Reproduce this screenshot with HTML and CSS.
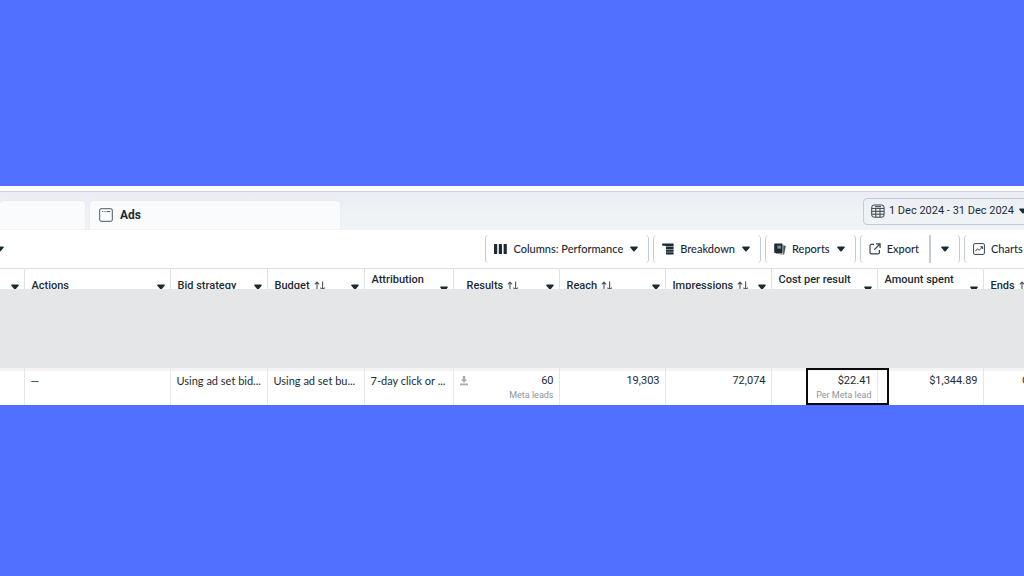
FILE: index.html
```html
<!DOCTYPE html>
<html lang="en">
  <head>
    <meta charset="UTF-8" />
    <meta name="viewport" content="width=device-width, initial-scale=1.0" />
    <title>Ads</title>
    <link rel="stylesheet" href="styles.css">
  </head>
  <body>
    <svg width="0" height="0" class="symbols" aria-hidden="true">
      <symbol id="caret" viewBox="0 0 8 6">
        <path d="M1 .5h6c.8 0 1.1.8.6 1.3L4.6 5.3c-.3.4-.9.4-1.2 0L.4 1.8C-.1 1.3.2.5 1 .5z" fill="currentColor" />
      </symbol>
      <symbol id="sort" viewBox="0 0 12 10">
        <path d="M3 9.5V1M.8 3.4L3 1l2.2 2.4M8.6.5V9M6.4 6.6L8.6 9l2.2-2.4" fill="none" stroke="currentColor" stroke-width="1.1" />
      </symbol>
    </svg>

    <main class="panel">
      <header class="tabs">
        <a href="#" class="tab tab-prev" aria-label="Ad sets"></a>
        <a href="#" class="tab tab-ads">
          <svg width="14" height="14" viewBox="0 0 14 14" fill="none" stroke="#4b5963">
            <rect x=".7" y=".7" width="12.6" height="12.6" rx="1.4" />
            <path d="M3 3.6h1.2M5.4 3.6h1.2M7.6 3.6h3.6" />
          </svg>
          Ads
        </a>
        <button class="date">
          <svg width="14" height="14" viewBox="0 0 14 14" fill="none" stroke="#34434c">
            <rect x=".7" y="1" width="12.4" height="12.2" rx="2.4" />
            <path d="M.7 4.4h12.4M.7 7.3h12.4M.7 10.2h12.4M4.8 4.4v8.8M9 4.4v8.8M4 2.7h6" />
          </svg>
          <span>1 Dec 2024 - 31 Dec 2024</span>
          <svg class="caret"><use href="#caret" /></svg>
        </button>
      </header>

      <div class="toolbar">
        <button class="more" aria-label="More"><svg class="caret"><use href="#caret" /></svg></button>
        <button class="tool columns">
          <svg width="13" height="10" viewBox="0 0 13 10" fill="#1c2b33">
            <rect x="0" y="0" width="3.2" height="10" rx=".6" />
            <rect x="4.8" y="0" width="3.2" height="10" rx=".6" />
            <rect x="9.6" y="0" width="3.2" height="10" rx=".6" />
          </svg>
          <span>Columns: Performance</span>
          <svg class="caret"><use href="#caret" /></svg>
        </button>
        <button class="tool breakdown">
          <svg width="12" height="12" viewBox="0 0 12 12" fill="#1c2b33">
            <path d="M.2.6h11.4v2.8H3.6V2.8H.2zM4 3.9h7.6v2.2H4zM4 6.6h7.6v2.2H4zM4 9.3h7.6v2.2H4z" />
          </svg>
          <span>Breakdown</span>
          <svg class="caret"><use href="#caret" /></svg>
        </button>
        <button class="tool reports">
          <svg width="12" height="12" viewBox="0 0 12 12">
            <path d="M1 .6h6.6c.6 0 1 .4 1 1v8c0 .6-.4 1-1 1H2.4L.2 9.4V1.6c0-.6.3-1 .8-1z" fill="#1c2b33" />
            <path d="M3.4 2.6h3.4v3H3.4z" fill="#87929a" />
            <path d="M9.2 2.2l2 .6c.4.1.6.5.5.9l-1.4 7c-.1.5-.5.8-1 .7L4 10.9h4.2c.6 0 1-.4 1-1z" fill="#46545d" />
          </svg>
          <span>Reports</span>
          <svg class="caret"><use href="#caret" /></svg>
        </button>
        <div class="split">
          <button class="tool export">
            <svg width="12" height="12" viewBox="0 0 12 12" fill="none" stroke="#34434c" stroke-width="1.2">
              <path d="M5 1.4H2.4C1.6 1.4 1 2 1 2.8v6.6c0 .8.6 1.4 1.4 1.4H9c.8 0 1.4-.6 1.4-1.4V7M7 .9h4.1V5M11 1L5.2 6.8" />
            </svg>
            <span>Export</span>
          </button>
          <button class="tool export-more" aria-label="Export options"><svg class="caret"><use href="#caret" /></svg></button>
        </div>
        <button class="tool charts">
          <svg width="12" height="12" viewBox="0 0 12 12" fill="none" stroke="#34434c">
            <rect x=".6" y=".6" width="10.8" height="10.8" rx="1.2" />
            <path d="M2.4 8.2l2-2.4 1.8 1.4L9.4 4M7.2 3.8h2.4v2.2" />
          </svg>
          <span>Charts</span>
        </button>
      </div>

      <table>
        <colgroup>
          <col class="c-first"><col class="c-actions"><col class="c-text"><col class="c-text"><col class="c-attr">
          <col class="c-num"><col class="c-num"><col class="c-num"><col class="c-num"><col class="c-num"><col>
        </colgroup>
        <thead>
          <tr>
            <th><div class="head"><svg class="caret"><use href="#caret" /></svg></div></th>
            <th><div class="head"><span>Actions</span><svg class="caret"><use href="#caret" /></svg></div></th>
            <th><div class="head"><span>Bid strategy</span><svg class="caret"><use href="#caret" /></svg></div></th>
            <th><div class="head"><span>Budget</span><svg class="sort"><use href="#sort" /></svg><svg class="caret"><use href="#caret" /></svg></div></th>
            <th><div class="head tall"><span>Attribution</span><svg class="caret"><use href="#caret" /></svg></div></th>
            <th><div class="head num"><span>Results</span><svg class="sort"><use href="#sort" /></svg><svg class="caret"><use href="#caret" /></svg></div></th>
            <th><div class="head"><span>Reach</span><svg class="sort"><use href="#sort" /></svg><svg class="caret"><use href="#caret" /></svg></div></th>
            <th><div class="head"><span>Impressions</span><svg class="sort"><use href="#sort" /></svg><svg class="caret"><use href="#caret" /></svg></div></th>
            <th><div class="head tall"><span>Cost per result</span><svg class="caret"><use href="#caret" /></svg></div></th>
            <th><div class="head tall"><span>Amount spent</span><svg class="caret"><use href="#caret" /></svg></div></th>
            <th><div class="head"><span>Ends</span><svg class="sort"><use href="#sort" /></svg></div></th>
          </tr>
        </thead>
        <tbody>
          <tr class="blank"><td colspan="11"></td></tr>
          <tr class="row">
            <td></td>
            <td>—</td>
            <td>Using ad set bid...</td>
            <td>Using ad set bu...</td>
            <td>7-day click or ...</td>
            <td class="right">
              <div class="result">
                <svg width="8" height="10" viewBox="0 0 8 10" fill="#a3abb0">
                  <path d="M2.8 0h2.4v3.4h2L4 6.8.8 3.4h2zM0 7.6h8v1.6H0z" />
                </svg>
                <span>60</span>
              </div>
              <small>Meta leads</small>
            </td>
            <td class="right">19,303</td>
            <td class="right">72,074</td>
            <td class="right marked">$22.41<small>Per Meta lead</small></td>
            <td class="right">$1,344.89</td>
            <td class="right ends">Ongoing</td>
          </tr>
        </tbody>
      </table>
    </main>
  </body>
</html>
```

FILE: styles.css
```css
*,
*::after {
  margin: 0;
  padding: 0;
  box-sizing: border-box;
}
body {
  font-family: Roboto, "Liberation Sans", sans-serif;
  font-size: 11px;
  line-height: 14px;
  color: #1c2b33;
  background-color: #5170ff;
  min-height: 100vh;
  display: flex;
  flex-direction: column;
  justify-content: center;
  padding-top: 14px;
  overflow: hidden;
}
.symbols {
  position: absolute;
}
button {
  font: inherit;
  color: inherit;
  background: none;
  border: none;
  cursor: pointer;
  white-space: nowrap;
}
svg {
  flex-shrink: 0;
}
.caret {
  width: 8px;
  height: 6px;
}
.sort {
  width: 12px;
  height: 10px;
  color: #4b5860;
}
/* the last column and the last button run past the right edge */
.panel {
  width: calc(100% + 66px);
  background-color: #fff;
  border-top: 5px solid #fff;
}

/* tabs */
.tabs {
  display: flex;
  align-items: flex-end;
  gap: 5px;
  height: 39px;
  border-top: 1px solid #cfd4da;
  background: linear-gradient(#eaedf4, #eff3f6 60%);
}
.tab {
  height: 29px;
  background-color: #fafbfd;
  border-radius: 4px 4px 0 0;
  box-shadow: 0 0 2px #dde2e7;
  color: inherit;
  font-size: 12px;
  font-weight: 700;
  text-decoration: none;
  clip-path: inset(-3px -3px 0 -3px);
}
.tab-prev {
  width: 85px;
}
.tab-ads {
  width: 250px;
  padding-left: 9px;
  display: flex;
  align-items: center;
  gap: 7px;
}
.date {
  display: flex;
  align-items: center;
  gap: 4px;
  height: 27px;
  margin: 0 56px 5px auto;
  padding: 0 6px 0 7px;
  border: 1px solid #c3cbd6;
  border-radius: 4px;
}
.date .caret {
  margin-left: 1px;
}

/* toolbar */
.toolbar {
  display: flex;
  align-items: center;
  justify-content: flex-end;
  gap: 4px;
  height: 38px;
  padding-right: 50px;
}
.more {
  display: flex;
  margin: 0 auto 0 -4px;
}
.tool {
  display: flex;
  align-items: center;
  gap: 6px;
  height: 28px;
  padding: 0 10px 0 8px;
  border-left: 1px solid #c3cbd3;
  border-right: 1px solid #c3cbd3;
  border-radius: 4px;
  font-family: Lato, Roboto, sans-serif;
  font-weight: 500;
}
.tool span + .caret {
  margin-left: 1px;
}
.split {
  display: flex;
}
.export {
  border-radius: 4px 0 0 4px;
}
.export-more {
  padding: 0 10px;
  border-radius: 0 4px 4px 0;
}
.charts {
  width: 76px;
}

/* table */
table {
  width: 100%;
  table-layout: fixed;
  border-collapse: collapse;
}
.c-first {
  width: 24px;
}
.c-actions {
  width: 146px;
}
.c-text {
  width: 97px;
}
.c-attr {
  width: 89px;
}
.c-num {
  width: 106px;
}
th {
  border-top: 1px solid #dcdfe2;
  border-right: 1px solid #dfe2e5;
  font-weight: 500;
  text-align: left;
}
.head {
  display: flex;
  gap: 4px;
  height: 20px;
  padding: 10px 5px 0 7px;
  overflow: hidden;
  white-space: nowrap;
}
.head .caret {
  margin: 5px 0 0 auto;
}
.head .sort {
  margin-top: 2px;
}
.head.tall {
  padding-top: 4px;
}
.head.tall .caret {
  margin-top: 13px;
}
.head.num {
  padding-left: 13px;
}
.blank td {
  height: 79px;
  background-color: #e4e6e8;
}
.row td {
  height: 37px;
  padding: 6px 5px 0 6px;
  border-right: 1px solid #e4e6e9;
  vertical-align: top;
  white-space: nowrap;
  box-shadow: inset 0 3px #f4f5f7;
  font-family: Lato, Roboto, sans-serif;
}
.row .right {
  text-align: right;
  font-family: Roboto, sans-serif;
}
small {
  display: block;
  font-size: 9px;
  color: #8d959a;
}
.result {
  display: flex;
  align-items: center;
  justify-content: space-between;
}
.row .marked {
  position: relative;
}
/* highlight box over the cost figure */
.marked::after {
  content: "";
  position: absolute;
  top: 0;
  right: -12px;
  width: 83px;
  height: 37px;
  border: 2px solid #0a0a0a;
}
.row .ends {
  padding-right: 26px;
}
```
